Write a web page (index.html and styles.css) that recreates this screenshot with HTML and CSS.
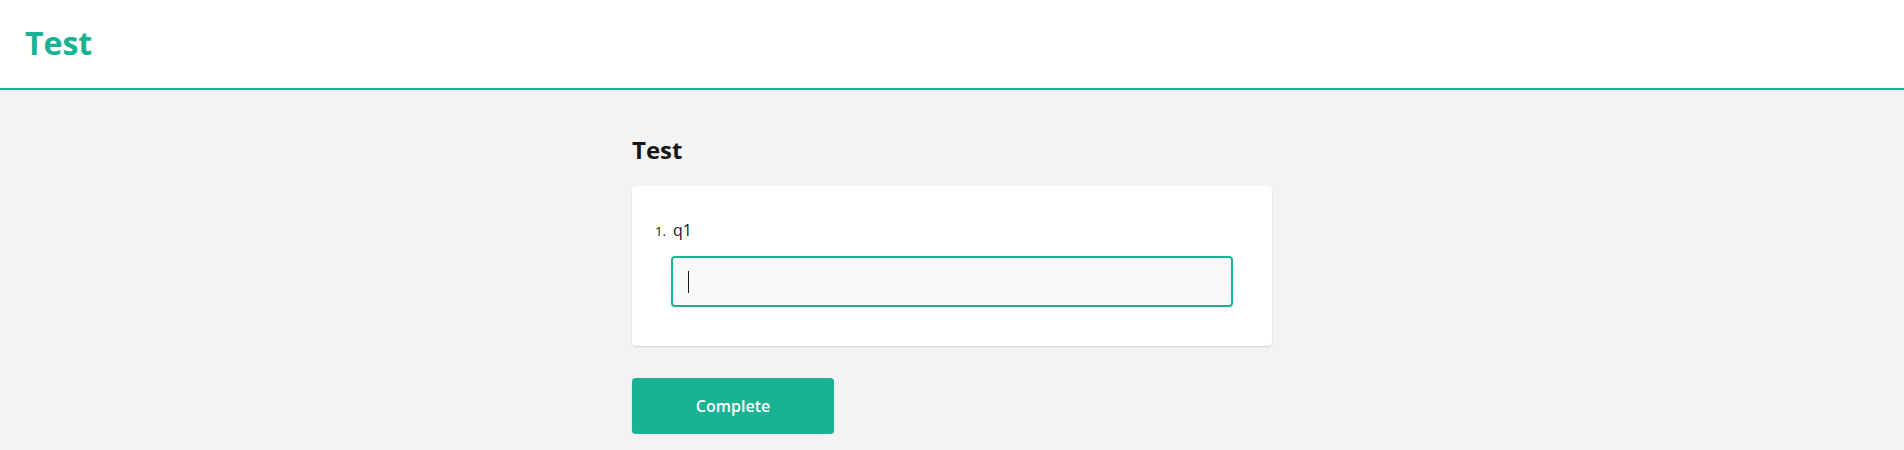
FILE: index.html
```html
<!DOCTYPE html>
<html lang="en">
<head>
<meta charset="utf-8">
<title>Test</title>
<link rel="stylesheet" href="styles.css">
</head>
<body>
<header class="site-header">
  <h1 class="site-title">Test</h1>
</header>
<main class="survey">
  <h2 class="survey-title">Test</h2>
  <section class="card">
    <div class="question-title">
      <span class="question-number">1.</span>
      <span class="question-text">q1</span>
    </div>
    <div class="text-input" role="textbox" aria-label="q1">
      <span class="caret"></span>
    </div>
  </section>
  <div class="nav">
    <button class="complete-btn" type="button">Complete</button>
  </div>
</main>
</body>
</html>
```
FILE: styles.css
```css
html, body {
  margin: 0;
  padding: 0;
}
body {
  background: #f3f3f3;
  font-family: "Open Sans", "Noto Sans", sans-serif;
  color: #161616;
}
.site-header {
  box-sizing: border-box;
  height: 90px;
  background: #ffffff;
  border-bottom: 2px solid #19b394;
  padding: 23px 0 0 25px;
}
.site-title {
  margin: 0;
  font-size: 32px;
  line-height: 40px;
  font-weight: 700;
  color: #19b394;
}
.survey {
  width: 640px;
  margin: 0 auto;
  padding-top: 44px;
}
.survey-title {
  margin: 0 0 20px 0;
  font-size: 24px;
  line-height: 32px;
  font-weight: 700;
  color: #161616;
}
.card {
  box-sizing: border-box;
  background: #ffffff;
  border-radius: 4px;
  box-shadow: 0 1px 2px rgba(0, 0, 0, 0.15);
  padding: 32px 39px 39px 39px;
}
.question-title {
  display: flex;
  align-items: baseline;
  margin-left: -16px;
  height: 24px;
  line-height: 24px;
}
.question-number {
  font-size: 13px;
  width: 18px;
}
.question-text {
  font-size: 16px;
}
.text-input {
  box-sizing: border-box;
  margin-top: 14px;
  height: 51px;
  background: #f9f9f9;
  border: 2px solid #19b394;
  border-radius: 4px;
  display: flex;
  align-items: center;
  padding-left: 15px;
}
.caret {
  display: block;
  width: 1px;
  height: 22px;
  background: #161616;
}
.nav {
  margin-top: 32px;
  display: flex;
}
.complete-btn {
  box-sizing: border-box;
  width: 202px;
  height: 56px;
  border: none;
  border-radius: 4px;
  background: #19b394;
  color: #ffffff;
  font-family: "Open Sans", "Noto Sans", sans-serif;
  font-size: 16px;
  font-weight: 600;
  line-height: 24px;
  box-shadow: 0 1px 2px rgba(0, 0, 0, 0.15);
  cursor: pointer;
}
```
